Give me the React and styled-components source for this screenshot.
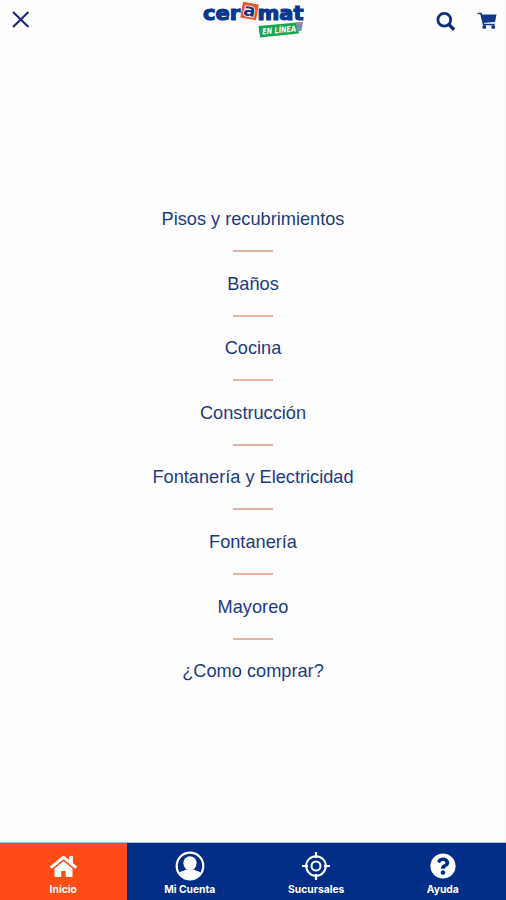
import React, {useState} from 'react';
import styled, {createGlobalStyle} from 'styled-components';
import {FaHome, FaQuestionCircle} from 'react-icons/fa';

const NAVY = "#002d86";
const ORANGE = "#fd4c14";

const GlobalStyle = createGlobalStyle`
  * {
    box-sizing: border-box;
  }
  body {
    margin: 0;
    background-color: white;
  }
`;

const Container = styled.div`
  display: flex;
  flex-direction: column;
  width: 100%;
  height: 100vh;
  background-color: #fefefe;
  border-right: 1px solid #f1f1f3;
  font-family: "Liberation Sans", Arial, sans-serif;
`;

const Header = styled.header`
  display: grid;
  grid-template-columns: 1fr 104px 1fr;
  align-items: start;
  height: 43px;
  margin-right: -1px;
`;

const IconButton = styled.button`
  display: flex;
  padding: 0;
  border: none;
  background: none;
  color: ${props => props.$color || NAVY};
  cursor: pointer;
`;

const CloseSlot = styled.div`
  padding: 11px 0 0 12px;
`;

const Actions = styled.div`
  display: flex;
  justify-content: flex-end;
  gap: 21px;
  padding: 12px 9px 0 0;
`;

const Logo = styled.svg`
  display: block;
  width: 104px;
  height: 40px;
`;

const Menu = styled.nav`
  flex: 1;
  display: flex;
  flex-direction: column;
  align-items: center;
  margin-right: -1px;
  padding-top: 165px;
`;

const MenuItem = styled.a`
  display: flex;
  flex-direction: column;
  align-items: center;
  height: 64.6px;
  color: #1d3a7e;
  font-size: 18.2px;
  line-height: 22px;
  text-decoration: none;
  white-space: nowrap;

  &:not(:last-child)::after {
    content: "";
    width: 40px;
    height: 2px;
    margin-top: 20px;
    background-color: #e5afa2;
  }
`;

const TabBar = styled.footer`
  display: grid;
  grid-template-columns: repeat(4, 1fr);
  height: 58px;
  margin-right: -1px;
  border-top: 1px solid #b4bccd;
`;

const Tab = styled.button`
  display: flex;
  flex-direction: column;
  align-items: center;
  padding: 0;
  border: none;
  background-color: ${props => props.$active ? ORANGE : NAVY};
  color: white;
  cursor: pointer;
`;

const TabIcon = styled.span`
  display: flex;
  align-items: center;
  justify-content: center;
  height: 30px;
  margin-top: 8px;
`;

const TabLabel = styled.span`
  margin-top: 1px;
  font-family: Inter, "Open Sans", sans-serif;
  font-size: 10.3px;
  font-weight: 700;
  line-height: 14px;
`;

const CloseIcon = () => (
  <svg width="18" height="17" viewBox="0 0 18 17">
    <path d="M1 1L16.5 16M16.5 1L1 16" stroke="currentColor" strokeWidth="2" />
  </svg>
);

const SearchIcon = () => (
  <svg width="20" height="20" viewBox="0 0 20 20" fill="none" stroke="currentColor">
    <circle cx="8.3" cy="7.8" r="6.4" strokeWidth="2.8" />
    <path d="M13 12.6L18.2 17.8" strokeWidth="3.4" />
  </svg>
);

const CartIcon = () => (
  <svg width="20" height="18" viewBox="0 0 20 18">
    <path d="M0.5 1.5H4L6.5 12.5H17.5" fill="none" stroke="currentColor" strokeWidth="1.6" />
    <path d="M4.5 2.5H19.5L18 10L6 11Z" fill="currentColor" />
    <circle cx="7.3" cy="15" r="2" fill="currentColor" />
    <circle cx="16.3" cy="15" r="2" fill="currentColor" />
  </svg>
);

const UserIcon = () => (
  <svg width="30" height="30" viewBox="0 0 30 30">
    <defs>
      <clipPath id="userClip">
        <circle cx="15" cy="15" r="13.5" />
      </clipPath>
    </defs>
    <circle cx="15" cy="15" r="13.3" fill="none" stroke="white" strokeWidth="2.2" />
    <g clipPath="url(#userClip)" fill="white">
      <ellipse cx="15" cy="12.2" rx="6.6" ry="7" />
      <path d="M3 30V24C4 20 8 20.5 11 18.5H19C22 20.5 26 20 27 24V30Z" />
    </g>
  </svg>
);

const TargetIcon = () => (
  <svg width="30" height="30" viewBox="0 0 30 30" fill="none" stroke="white">
    <circle cx="15" cy="15" r="9.8" strokeWidth="2" />
    <circle cx="15" cy="15" r="4.5" strokeWidth="2" />
    <path d="M15 1V7M15 23V29M1 15H7M23 15H29" strokeWidth="2.2" />
  </svg>
);

const CeramatLogo = () => (
  <Logo viewBox="0 0 104 40" fontFamily="DejaVu Sans, sans-serif" fontWeight="700">
    <g fill="#07378f" stroke="#07378f" strokeWidth="1.2">
      <text x="2" y="20" fontSize="20" textLength="37" lengthAdjust="spacingAndGlyphs">cer</text>
      <text x="56.5" y="20" fontSize="20" textLength="46" lengthAdjust="spacingAndGlyphs">mat</text>
    </g>
    <g transform="rotate(10 48.5 11)">
      <rect x="40.5" y="3" width="16" height="16" fill="#ed552d" />
      <text x="42.5" y="16" fontSize="17" fill="#07378f" stroke="white" strokeWidth="1.5" paintOrder="stroke" textLength="12" lengthAdjust="spacingAndGlyphs">a</text>
    </g>
    <path d="M57.5 26L96 22.5L98 33.5L59 37.5Z" fill="#15a74d" />
    <text
      transform="translate(61 34.5) rotate(-5) skewX(-8)"
      fontSize="8.2"
      fill="white"
      textLength="34"
      lengthAdjust="spacingAndGlyphs"
    >
      EN LÍNEA
    </text>
    <path d="M95 22H102L100.5 31H96Z" fill="#7891bd" />
    <path d="M95.5 23.5H101.5" stroke="#d88278" strokeWidth="1.5" />
  </Logo>
);

const menuItems = [
  "Pisos y recubrimientos",
  "Baños",
  "Cocina",
  "Construcción",
  "Fontanería y Electricidad",
  "Fontanería",
  "Mayoreo",
  "¿Como comprar?",
];

const tabs = [
  {label: "Inicio", icon: <FaHome size={27} />},
  {label: "Mi Cuenta", icon: <UserIcon />},
  {label: "Sucursales", icon: <TargetIcon />},
  {label: "Ayuda", icon: <FaQuestionCircle size={26} />},
];

function App() {

  const [activeTab, setActiveTab] = useState("Inicio");

  return (
    <>
      <GlobalStyle />
      <Container>
        <Header>
          <CloseSlot>
            <IconButton $color="#17217c" aria-label="Cerrar"><CloseIcon /></IconButton>
          </CloseSlot>
          <CeramatLogo />
          <Actions>
            <IconButton $color="#0b2d7e" aria-label="Buscar"><SearchIcon /></IconButton>
            <IconButton $color="#12388b" aria-label="Carrito"><CartIcon /></IconButton>
          </Actions>
        </Header>

        <Menu>
          {menuItems.map((item) => (
            <MenuItem key={item}>{item}</MenuItem>
          ))}
        </Menu>

        <TabBar>
          {tabs.map(({label, icon}) => (
            <Tab key={label} $active={label === activeTab} onClick={() => setActiveTab(label)}>
              <TabIcon>{icon}</TabIcon>
              <TabLabel>{label}</TabLabel>
            </Tab>
          ))}
        </TabBar>
      </Container>
    </>
  );
}

export default App;
